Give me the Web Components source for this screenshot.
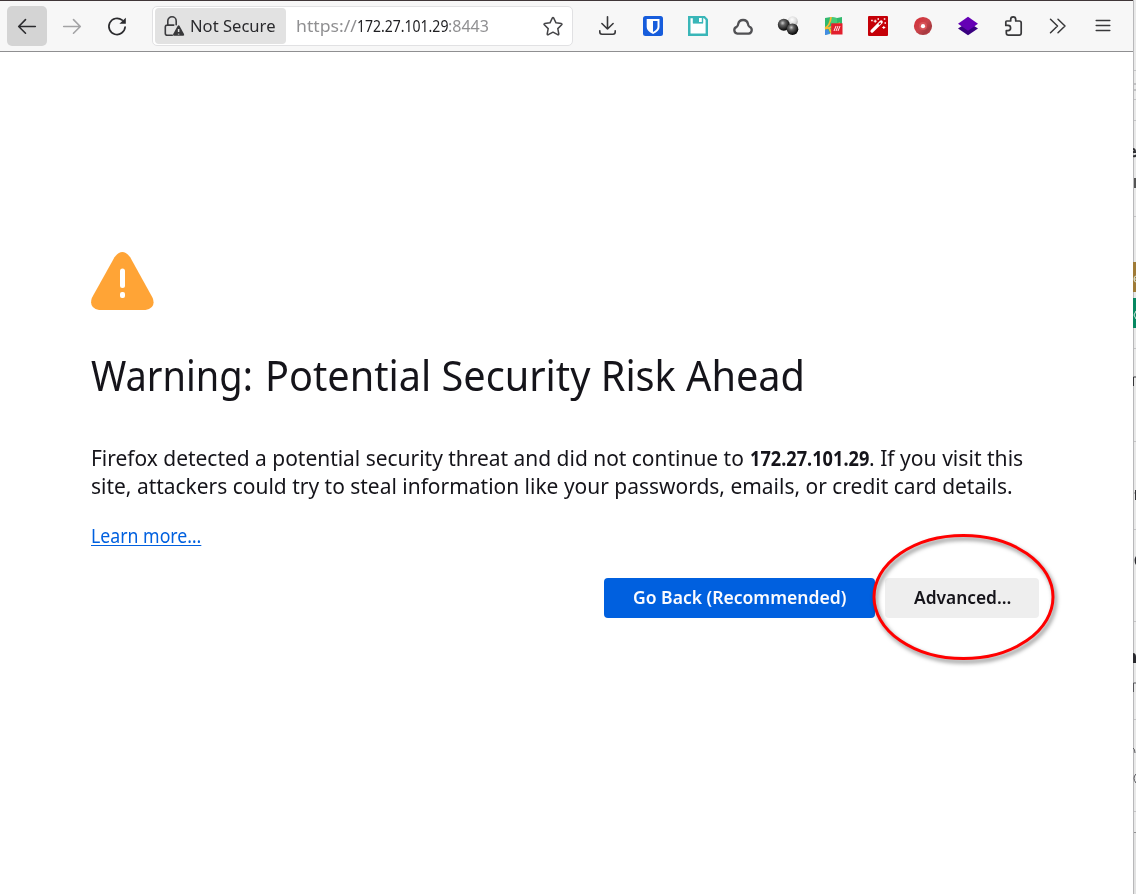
<!DOCTYPE html>
<html lang="en"><head><meta charset="utf-8"><title>Warning: Potential Security Risk Ahead</title>
<style>html,body{margin:0;height:100%;overflow:hidden;background:#fff}body{font-family:"Noto Sans","Open Sans",sans-serif;color:#15141a}</style></head>
<body><browser-window></browser-window>
<script>
function define(name, markup, setup){
  const t=document.createElement('template');t.innerHTML=markup;
  customElements.define(name,class extends HTMLElement{
    constructor(){super();this.attachShadow({mode:'open'}).append(t.content.cloneNode(true));}
    connectedCallback(){if(setup)setup(this,this.shadowRoot);}
  });
}
// Condenses a text run to the width given in its attribute.
define('fit-text',`<style>:host{display:inline-block;white-space:nowrap;flex:none}span{display:inline-block;transform-origin:0 50%}</style><span><slot></slot></span>`,(el,root)=>{
  const s=root.querySelector('span'),w=+el.getAttribute('width');
  el.style.width=w+'px';
  s.style.transform='scaleX('+w/s.offsetWidth+')';
});
const icons={
back:`<g fill="none" stroke="#2b2b2e" stroke-width="1.6" stroke-linecap="round" stroke-linejoin="round"><path d="M8.3.5H-8M-1.5-6.4-8.3.5-1.5 7.2"/></g>`,
forward:`<g fill="none" stroke="#a3a3a5" stroke-width="1.6" stroke-linecap="round" stroke-linejoin="round"><path d="M-8.3.5H8M1.5-6.4 8.3.5 1.5 7.2"/></g>`,
reload:`<path d="M5.2-5.8A8.1 8.1 0 1 0 8.1 1" fill="none" stroke="#2b2b2e" stroke-width="1.7" stroke-linecap="round"/><path d="M8.8-8.2V-2.2H2.4Z" fill="#2b2b2e"/>`,
lock:`<g fill="none" stroke="#3b3b3e" stroke-width="1.6" stroke-linecap="round"><path d="M-1.7 9.2H-6.8Q-8.7 9.2-8.7 7.2V1.1Q-8.7-.9-6.8-.9H-.2M-6.2-.9V-5A4.2 4.2 0 0 1 2.2-5V-1.2"/></g><path d="M3.6.1q1-1.6 2 0L10 8q.8 1.6-.8 1.7H0Q-1.6 9.6-.8 8Z" fill="#38383a"/><path d="M4.6 3v3M4.6 7.7v.8" stroke="#e2e2e2" stroke-width="1.5"/>`,
star:`<path d="M-.6-8.1Q0-9 .6-8.1L3-3.2 8.4-2.4Q9.5-2.1 8.7-1.2L4.8 2.6 5.8 8Q5.8 9.2 4.7 8.7L0 6.2-4.7 8.7Q-5.8 9.2-5.8 8L-4.8 2.6-8.7-1.2Q-9.5-2.1-8.4-2.4L-3-3.2Z" fill="none" stroke="#444447" stroke-width="1.5" stroke-linejoin="round"/>`,
download:`<path d="M-.5-9.3V3M-6.1-2.5-.5 3 5.1-2.5M-8.2 4.7V6Q-8.2 8.2-6 8.2H5Q7.2 8.2 7.2 6V4.7" fill="none" stroke="#38383a" stroke-width="1.6" stroke-linecap="round" stroke-linejoin="round"/>`,
shield:`<rect x="-10" y="-10" width="20" height="20" rx="2.5" fill="#175ddc"/><path d="M-6.3-7H6.5V1Q6.5 5.2.1 8-6.3 5.2-6.3 1Z" fill="#fff"/><path d="M0-5H4.5V1Q4.5 3.8 0 5.9Z" fill="#175ddc"/>`,
floppy:`<path d="M-10-10H6.8L10-6.8V10H-10Z" fill="#3ab6b8"/><path d="M-7.5-7.8H-5V-2.5H5V-7.8H6L7.6-6V7.5H-7.5Z" fill="#fff"/><path d="M-5.2-9H5.2V-2.8H-5.2Z" fill="#3ab6b8"/><path d="M1-8H3.8V-4H1Z" fill="#fff"/>`,
cloud:`<path d="M-5.6 7.6A3.5 3.5 0 0 1-6.3.8Q-5-.1-4.8-2A5 5 0 0 1 5-2Q5.2 0 6.5.7A3.6 3.6 0 0 1 5.6 7.6Z" fill="none" stroke="#515154" stroke-width="2.3"/>`,
balls:`<defs><radialGradient id="d" cx=".4" cy=".35" r=".6"><stop stop-color="#ccc"/><stop offset=".35" stop-color="#636363"/><stop offset="1" stop-color="#0c0c0c"/></radialGradient><radialGradient id="l" cx=".45" cy=".35" r=".65"><stop stop-color="#fff"/><stop offset=".6" stop-color="#dcdcdc"/><stop offset="1" stop-color="#aaa"/></radialGradient></defs><circle cx="4.6" cy="-4.6" r="5.2" fill="url(#l)"/><circle cx="-4.2" cy="-1.2" r="6" fill="url(#d)"/><circle cx="4.5" cy="3.2" r="5.8" fill="url(#d)"/>`,
map:`<path d="M-8-8-2-9 4-8 9-9V7L3 8-2 7-8 9Z" fill="#31b96d"/><path d="M-2-9 4-8V8L-2 7Z" fill="#46cb77"/><path d="M-8 2Q-3 0-2-9M-8 3Q2 0 7-3M-4 2-1 8" fill="none" stroke="#f9ba32" stroke-width="1.8"/><path d="M-8 4-5 3-3 8-8 9Z" fill="#438de3"/><path d="M-1.8-2.7H9.5V8.5H-1.8Z" fill="#e21f2d"/><path d="m1 5 2-5m0 5 2-5m0 5 2-5" stroke="#fff" stroke-width=".9"/>`,
wand:`<rect x="-10" y="-10" width="20" height="20" rx="1" fill="#c50008"/><path d="M-6 5.1 3.2-4" stroke="#fff" stroke-width="3.2" stroke-linecap="round"/><path d="m.9-1.5 1.8-1.7" stroke="#c50008" stroke-width="1.5"/><path d="M-2.8-6.3v3M-4.3-4.8h3M5.8 0v3M4.3 1.5h3" stroke="#fff"/><path d="M-6.8-5.5h1.5M-.5-7h1.5M6.5-3h1.5M5.8-7h1.5" stroke="#fff" stroke-width="1.3"/>`,
disc:`<defs><linearGradient id="g" x2="1" y2="1"><stop stop-color="#d92d36"/><stop offset=".5" stop-color="#c9444b"/><stop offset=".75" stop-color="#a63a40"/><stop offset="1" stop-color="#df444a"/></linearGradient></defs><circle r="9.1" fill="url(#g)"/><circle r="4" fill="#d95358"/><circle cy=".2" r="2.1" fill="#fff"/>`,
layers:`<path d="M-10 2.5 0-4 10 2.5 0 9.2Z" fill="#390080"/><path d="M-10-2.3 0-9.3 10-2.3 0 4.7Z" fill="#6500b5"/>`,
puzzle:`<path d="M-6.2-5H-2.3V-6.7A2.5 2.5 0 0 1 2.7-6.7V-5H6.3Q8.2-5 8.2-3V7Q8.2 9.1 6.2 9.1H-4.5Q-6.7 9.1-6.7 7V4.6H-5A2.6 2.6 0 0 0-5-.6H-7.2V-4Q-7.2-5-6.2-5Z" fill="none" stroke="#38383a" stroke-width="1.7" stroke-linejoin="round"/>`,
chevrons:`<path d="M-7.5-6.8-.5 0-7.5 6.8M0-6.8 7 0 0 6.8" fill="none" stroke="#38383a" stroke-width="1.5" stroke-linecap="round" stroke-linejoin="round"/>`,
menu:`<path d="M-6.8-5.5H6.8M-6.8-.5H6.8M-6.8 4.5H6.8" stroke="#38383a" stroke-width="1.5" stroke-linecap="round"/>`
};
define('tool-icon',`<style>:host{display:flex;align-items:center;justify-content:center;width:40px;height:40px;border-radius:5px;flex:none}:host([active]){background:#d4d4d4}:host([small]){width:24px}svg{width:24px;height:24px}</style><svg viewBox="-12 -12 24 24"></svg>`,(el,root)=>{root.querySelector('svg').innerHTML=icons[el.getAttribute('name')];});
define('address-bar',`<style>
:host{box-sizing:border-box;display:flex;align-items:center;width:421px;height:40px;margin:0 10px;border:1px solid #e1e1e3;border-radius:5px;background:#fff;padding:1px 7px 1px 2px;font-size:16.8px;color:#909092}
.id{display:flex;align-items:center;width:131px;height:36px;border-radius:4px;background:#e2e2e2;color:#2a2a2d;box-sizing:border-box;padding-left:7px;gap:4px;margin-right:10px}
b{font-weight:400;color:#202023}tool-icon[name=star]{margin-left:auto}
</style><div class="id"><tool-icon small name="lock"></tool-icon><fit-text width="86">Not Secure</fit-text></div><fit-text width="61">https://</fit-text><b><fit-text width="91">172.27.101.29</fit-text></b><fit-text width="41">:8443</fit-text><tool-icon small name="star"></tool-icon>`);
define('nav-toolbar',`<style>:host{box-sizing:border-box;display:flex;align-items:center;gap:5px;height:52px;padding:0 0 1px 7px;background:#f7f7f7;border-top:1px solid #403638;border-bottom:1px solid #8f8f91}</style>
<tool-icon active name="back"></tool-icon><tool-icon name="forward"></tool-icon><tool-icon name="reload"></tool-icon><address-bar></address-bar>`+
['download','shield','floppy','cloud','balls','map','wand','disc','layers','puzzle','chevrons','menu'].map(n=>`<tool-icon name="${n}"></tool-icon>`).join(''));
define('page-button',`<style>:host{box-sizing:border-box;display:flex;align-items:center;justify-content:center;height:40px;width:154px;border-radius:4px;background:#eee;color:#15141a;font-weight:600;font-size:18.6px;line-height:37px;padding-bottom:3px}:host([primary]){background:#0060df;color:#fbfbfe;width:271px}</style><slot></slot>`);
define('highlight-ring',`<style>:host{position:absolute;left:-16px;top:-50px;width:190px;height:140px;pointer-events:none}svg{display:block;overflow:visible;filter:drop-shadow(2px 3px 2px rgba(0,0,0,.5))}</style><svg width="190" height="140"><ellipse cx="94.5" cy="69" rx="89.5" ry="61.5" fill="none" stroke="#ff0000" stroke-width="3"/></svg>`);
define('security-warning',`<style>
:host{display:block;padding:200px 0 0 91px;box-sizing:border-box}
.warn{display:block;width:63px;height:58px}
h1{display:flex;gap:12px;font-size:41.5px;line-height:56px;font-weight:400;margin:37px 0 0;height:56px}
.copy{margin-top:41px;font-size:21.4px;line-height:28px}
.line{display:flex;height:28px;align-items:baseline}.line b{margin-left:6px}
.line b{font-weight:700}
.learn{margin-top:22px;font-size:19px;line-height:28px;color:#0060df;width:110px;height:28px}
a{color:inherit;text-decoration:underline;text-decoration-thickness:1px;text-underline-offset:2px}
.actions{display:flex;gap:10px;margin:28px 0 0 513px}.target{position:relative}
</style>
<svg class="warn" viewBox="0 0 63 58"><path d="M23.5 5.2Q31.3-5.2 39.2 5.2L61.7 46Q65.3 56.3 54.5 58H8Q-2.3 56.3.8 46Z" fill="#ffa436"/><path d="M31.5 19V33.5" stroke="#fff" stroke-width="5" stroke-linecap="round"/><rect x="29" y="40" width="5" height="6" rx="2" fill="#fff"/></svg>
<h1><fit-text width="162">Warning:</fit-text> <fit-text width="540">Potential Security Risk Ahead</fit-text></h1>
<div class="copy"><div class="line"><fit-text width="653">Firefox detected a potential security threat and did not continue to</fit-text><b><fit-text width="119">172.27.101.29</fit-text></b><fit-text width="154">. If you visit this</fit-text></div><div class="line"><fit-text width="922">site, attackers could try to steal information like your passwords, emails, or credit card details.</fit-text></div></div>
<div class="learn"><fit-text width="110"><a>Learn more…</a></fit-text></div>
<div class="actions"><page-button primary><fit-text width="213">Go Back (Recommended)</fit-text></page-button><div class="target"><page-button><fit-text width="97">Advanced…</fit-text></page-button><highlight-ring></highlight-ring></div></div>`);
// Sliver of the window that sits behind the browser at the right edge.
define('background-window',`<style>:host{display:block;height:894px;overflow:hidden}svg{display:block}</style><svg width="3" height="894"><rect width="3" height="894" fill="#e9e9e9"/><rect y="832" width="3" height="62" fill="#e2e2e2"/><path d="M0 70.5H3M0 99.5H3M0 120.5H3M0 216.5H3M0 348.5H3M0 441.5H3M0 529.5H3M0 621.5H3M0 719.5H3M0 811.5H3" stroke="#c4c4c6"/><path d="M0 832.5H3" stroke="#929294"/><path d="M.5 0V894" stroke="#b8b8ba"/><rect y="262" width="3" height="30" fill="#9f7b37"/><rect y="298" width="3" height="30" fill="#078861"/><path d="M2 83v2M2 89v2" stroke="#9a9a9d"/><path d="M0 149q2 0 2 3H0m0 4q2 1 3-1" fill="none" stroke="#303034" stroke-width="2"/><path d="M2 178v10" stroke="#555" stroke-width="2"/><path d="M3 276q-2 0-2 3h2m-2 0q0 3 2 3M3 311l-2 4 2 4" stroke="#dae7df" fill="none"/><path d="M.5 386v-9h2.5M1.5 493H3M2.5 490v10" stroke="#333337" fill="none"/><path d="M3 556q-3 4 0 9ZM0 653q3 0 3 4v6H0Z" fill="#29292e"/><path d="M.5 692v-9h2.5M0 748q2 1 2 5M3 774q-4 4 0 9" fill="none" stroke="#55555a"/></svg>`);
define('browser-window',`<style>:host{display:grid;grid-template-columns:1133px 3px;width:1136px;height:894px;background:#fff;overflow:hidden}</style><main><nav-toolbar></nav-toolbar><security-warning></security-warning></main><background-window></background-window>`);
</script></body></html>
